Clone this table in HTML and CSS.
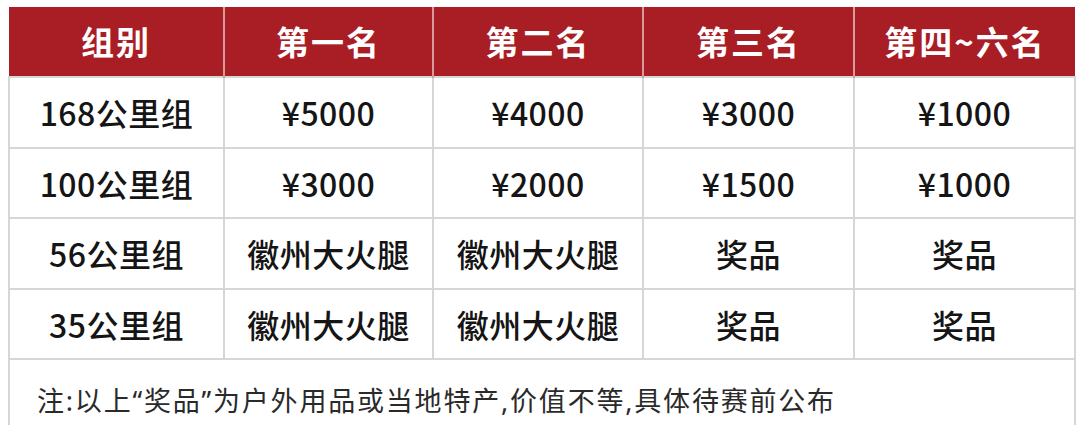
FILE: index.html
```html
<!DOCTYPE html>
<html lang="zh-CN">
<head>
<meta charset="utf-8">
<title>奖金设置</title>
<link rel="stylesheet" href="styles.css">
</head>
<body>
<table class="prize">
  <colgroup>
    <col class="c1"><col class="c2"><col class="c3"><col class="c4"><col class="c5">
  </colgroup>
  <thead>
    <tr class="head">
      <th>组别</th><th>第一名</th><th>第二名</th><th>第三名</th><th>第四~六名</th>
    </tr>
  </thead>
  <tbody>
    <tr class="row"><td>168公里组</td><td>¥5000</td><td>¥4000</td><td>¥3000</td><td>¥1000</td></tr>
    <tr class="row"><td>100公里组</td><td>¥3000</td><td>¥2000</td><td>¥1500</td><td>¥1000</td></tr>
    <tr class="row"><td>56公里组</td><td>徽州大火腿</td><td>徽州大火腿</td><td>奖品</td><td>奖品</td></tr>
    <tr class="row"><td>35公里组</td><td>徽州大火腿</td><td>徽州大火腿</td><td>奖品</td><td>奖品</td></tr>
    <tr class="note"><td colspan="5">注:以上“奖品”为户外用品或当地特产,价值不等,具体待赛前公布</td></tr>
  </tbody>
</table>
</body>
</html>
```
FILE: styles.css
```css
html, body {
  margin: 0;
  padding: 0;
  background: #ffffff;
}
body {
  padding: 7px 0 0 8px;
  font-family: "Noto Sans CJK SC", "Noto Sans", sans-serif;
  overflow: hidden;
}
.prize {
  border-collapse: collapse;
  table-layout: fixed;
  width: 1066px;
}
.c1 { width: 215px; }
.c2 { width: 209px; }
.c3 { width: 210px; }
.c4 { width: 211px; }
.c5 { width: 221px; }

.head th {
  background: #a91d25;
  color: #ffffff;
  font-size: 33px;
  font-weight: 700;
  letter-spacing: 2px;
  height: 69px;
  padding: 0;
  text-align: center;
  vertical-align: middle;
  border-left: 2px solid #d99a9c;
  border-right: 2px solid #d99a9c;
  line-height: 1;
}
.head th:first-child { border-left: 0; }
.head th:last-child { border-right: 0; }

.row td {
  height: 68.5px;
  padding: 0;
  text-align: center;
  vertical-align: middle;
  border: 2px solid #d6d6d6;
  font-size: 32px;
  font-weight: 500;
  color: #151515;
  letter-spacing: 0.5px;
  line-height: 1;
}
.note td {
  border: 2px solid #d6d6d6;
  padding: 24px 0 30px 27px;
  font-family: "Noto Sans", "Noto Sans CJK SC", sans-serif;
  font-size: 27px;
  color: #2a2a2a;
  letter-spacing: 1.8px;
  line-height: 34px;
  text-align: left;
}
```
